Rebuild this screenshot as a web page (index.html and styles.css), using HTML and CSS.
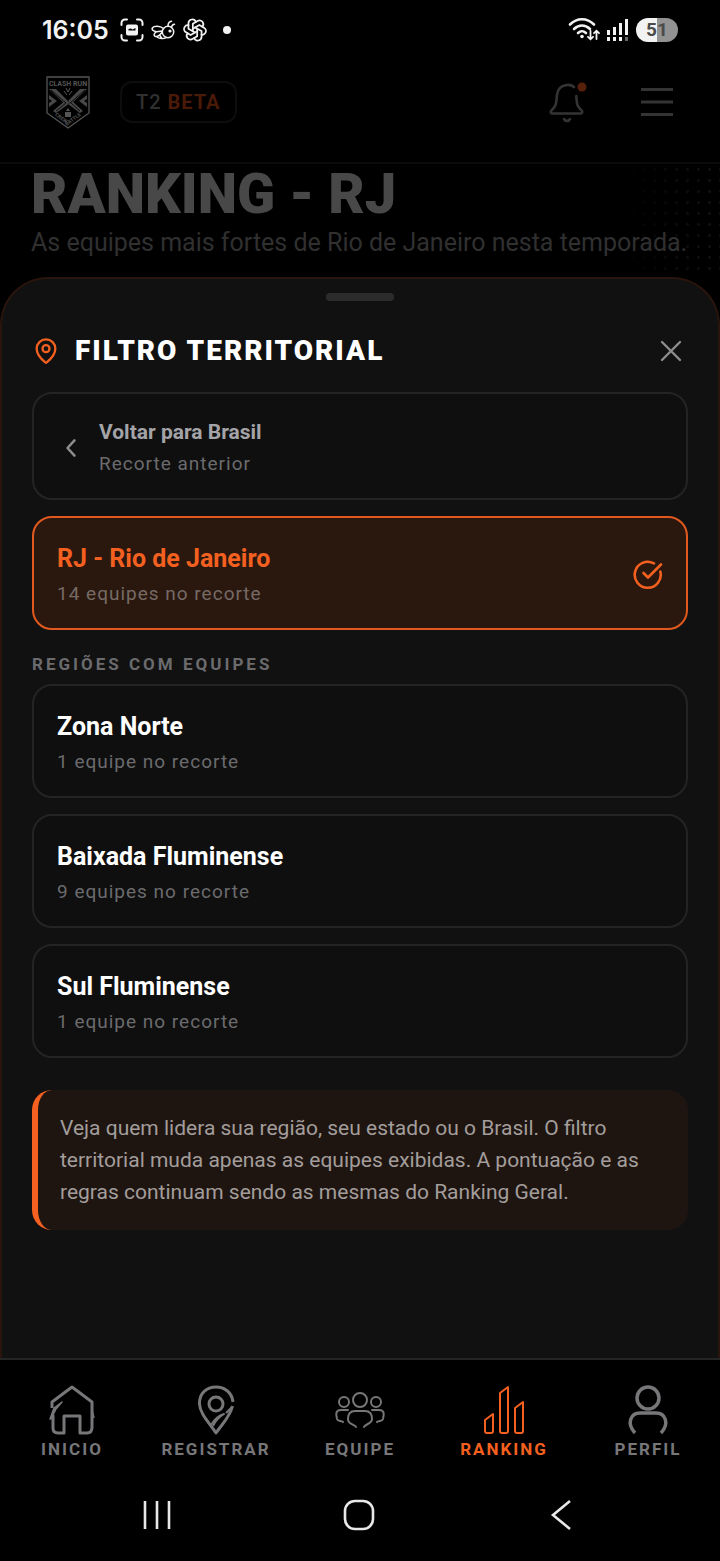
FILE: index.html
```html
<!DOCTYPE html>
<html lang="pt-BR">
<head>
  <meta charset="UTF-8">
  <meta name="viewport" content="width=device-width, initial-scale=1.0">
  <title>Clash Run - Ranking</title>
  <link rel="stylesheet" href="styles.css">
</head>
<body>
  <div class="status-bar">
    <span class="clock">16:05</span>
    <svg class="status-icon" width="24" height="24" viewBox="0 0 24 24" fill="none" stroke="#f2f2f2" stroke-width="2" stroke-linecap="round">
      <path d="M1.500 7V5a3.500 3.500 0 0 1 3.500-3.500h2M17 1.500h2A3.500 3.500 0 0 1 22.500 5v2M22.500 17v2a3.500 3.500 0 0 1-3.500 3.500h-2M7 22.500H5A3.500 3.500 0 0 1 1.500 19v-2"/>
      <rect x="6" y="6.500" width="12" height="11" rx="2" fill="#f2f2f2" stroke="none"/>
      <path d="M8.500 12.500V11l2.500-.5 1.500 1 3-1.500v2.500z" fill="#000" stroke="none"/>
    </svg>
    <svg class="status-icon" width="25" height="22" viewBox="0 0 25 22" fill="none" stroke="#f2f2f2" stroke-width="1.500" stroke-linecap="round" stroke-linejoin="round">
      <circle cx="17" cy="13" r="5.700"/>
      <path d="M12.500 9.500C9 6.500 3 6.500 1.300 9c-1 2.500 3 4 6 3.600l4-.6M5 13c-2 1.500-2.500 3.500-1 4.200 2.500.8 5-1.200 7-4M6 18c2.500 2 7 2 9 .6M9 16.500l1.500 2.500M17 7c0-3 1-4.500 3.500-4.800M20.500 8.500c.3-2 1-3 3-3.200"/>
      <circle cx="19" cy="12" r="1.600" fill="#f2f2f2" stroke="none"/>
    </svg>
    <svg class="status-icon" width="24" height="24" viewBox="1 1 22 22" fill="none" stroke="#f2f2f2" stroke-width="1.600" stroke-linecap="round" stroke-linejoin="round">
      <path d="M11.217 19.384a3.501 3.501 0 0 0 6.783-1.217V13l-6-3.350"/>
      <path d="M5.214 15.014a3.501 3.501 0 0 0 4.446 5.266L14 17.746V10.800"/>
      <path d="M6 7.630c-1.391-.236-2.787.395-3.534 1.689a3.474 3.474 0 0 0 1.271 4.745L8 16.578l6-3.348"/>
      <path d="M12.783 4.616A3.501 3.501 0 0 0 6 5.833V10.900l6 3.450"/>
      <path d="M18.786 8.986A3.501 3.501 0 0 0 14.340 3.720L10 6.254V13.200"/>
      <path d="M18 16.302c1.391.236 2.787-.395 3.534-1.689a3.474 3.474 0 0 0-1.271-4.745l-4.308-2.514L10 10.774"/>
    </svg>
    <span class="more-dot"></span>
    <svg class="signal" width="32" height="26" viewBox="0 0 32 26" fill="none" stroke="#f2f2f2" stroke-width="2.600" stroke-linecap="round">
      <path d="M2 7.500C9 .500 19 .500 26 7.500M6 12c5-4.500 11-4.500 16 0M10 16c3-2.600 5-2.600 8 0"/>
      <circle cx="14" cy="19.500" r="1.800" fill="#f2f2f2" stroke="none"/>
      <path d="M22.500 14v8M20 19.800l2.500 2.500 2.500-2.500M28.500 22v-8M26 16.200l2.500-2.500 2.500 2.500" stroke-width="1.800"/>
    </svg>
    <svg width="21" height="24" viewBox="0 0 21 24" fill="#f2f2f2">
      <rect x="0" y="12" width="3" height="5"/><rect x="6" y="9" width="3" height="8"/><rect x="12" y="5" width="3" height="12"/><rect x="18" y="1" width="3" height="16"/>
      <rect x="0" y="19" width="3" height="4"/><rect x="6" y="19" width="3" height="4"/><rect x="12" y="19" width="3" height="4"/><rect x="18" y="19" width="3" height="4" fill="#666"/>
    </svg>
    <span class="battery">51</span>
  </div>

  <header class="header">
    <a href="#" class="logo" aria-label="Clash Run">
      <svg width="44" height="53" viewBox="0 0 44 53" fill="none" stroke="#555">
        <path d="M1 1h42v36L22 52 1 37z" stroke-width="1.300"/>
        <text x="22" y="10" class="logo-name" text-anchor="middle">CLASH RUN</text>
        <path d="M3 13h7l12 12-3 3zM41 13h-7L22 25l3 3z" fill="#484848" stroke="none"/>
        <path d="M7 35l13-11 4 3-14 10zM37 35L26 25l-4 3 12 9z" fill="#484848" stroke="none"/>
        <path d="M3 19l8 6-8 6v-4l3-2-3-2zM41 19l-8 6 8 6v-4l-3-2 3-2z" fill="#484848" stroke="none"/>
        <path d="M5 14l15 13M39 14L24 27M10 35l10-8M34 35l-9-8" stroke="#0a0a0a" stroke-width="1"/>
        <path d="M20 12l2 4 2-4M18 15l3 4M26 15l-3 4" stroke-width="1"/>
        <path d="M19 36h6v5h-6zM20 35l2-3 2 3" fill="#555" stroke="none"/>
        <path id="logo-curve" d="M4 36L22 49 40 36" stroke="none"/>
        <text class="logo-sub" text-anchor="middle"><textPath href="#logo-curve" startOffset="50%">CREW BATTLE</textPath></text>
      </svg>
    </a>
    <span class="season">T2 <b>BETA</b></span>
    <button class="icon-btn bell" type="button" aria-label="Notificações">
      <svg width="38" height="42" viewBox="0 0 38 42" fill="none" stroke="#343434" stroke-width="2.600" stroke-linecap="round" stroke-linejoin="round">
        <path d="M25 6C22 3 14 3 10.500 7.500c-4 5-2 11.500-4 16.500-1 2.500-3 4-4.500 6-.7 1.500 0 2.500 1.500 2.500h28c1.500 0 2-1 1.500-2.500-1.500-2-3.500-3.500-4.500-6-1-3-1-6-1.200-9"/>
        <path d="M15 38c1 2.500 5 2.500 6 0"/>
        <circle cx="33" cy="6" r="4.500" fill="#57200a" stroke="none"/>
      </svg>
    </button>
    <button class="icon-btn" type="button" aria-label="Menu">
      <svg width="32" height="30" viewBox="0 0 32 30" stroke="#343434" stroke-width="3">
        <path d="M0 2.500h32M0 15h32M0 27.500h32"/>
      </svg>
    </button>
  </header>

  <section class="hero">
    <h1>RANKING - RJ</h1>
    <p>As equipes mais fortes de Rio de Janeiro nesta temporada.</p>
  </section>

  <main class="sheet">
    <div class="handle"></div>
    <div class="sheet-head">
      <svg width="28" height="28" viewBox="0 0 24 24" fill="none" stroke="#f4601f" stroke-width="2" stroke-linejoin="round">
        <path d="M20 10c0 5-5.500 10.200-7.400 11.800a1 1 0 0 1-1.200 0C9.500 20.200 4 15 4 10a8 8 0 0 1 16 0z"/>
        <circle cx="12" cy="10" r="3"/>
      </svg>
      <h2>FILTRO TERRITORIAL</h2>
      <button class="icon-btn" type="button" aria-label="Fechar">
        <svg width="22" height="22" viewBox="0 0 22 22" stroke="#8d8d90" stroke-width="2.400" stroke-linecap="round"><path d="M2 2l18 18M20 2L2 20"/></svg>
      </button>
    </div>

    <div class="options">
      <button class="option back" type="button">
        <svg width="28" height="28" viewBox="0 0 24 24" fill="none" stroke="#8d8d90" stroke-width="2.200" stroke-linecap="round" stroke-linejoin="round"><path d="M15 18.500l-6-6.500 6-6.500"/></svg>
        <span class="option-text">
          <strong>Voltar para Brasil</strong>
          <small>Recorte anterior</small>
        </span>
      </button>
      <button class="option active" type="button">
        <span class="option-text">
          <strong>RJ - Rio de Janeiro</strong>
          <small>14 equipes no recorte</small>
        </span>
        <svg width="30" height="30" viewBox="0 0 30 30" fill="none" stroke="#f4601f" stroke-width="2.600" stroke-linecap="round" stroke-linejoin="round">
          <path d="M27.300 11.500A13 13 0 1 1 21 3.400"/><path d="M10.500 13l4.500 4.500L28 4.500"/>
        </svg>
      </button>
    </div>

    <h3>REGIÕES COM EQUIPES</h3>
    <div class="options">
      <button class="option" type="button">
        <span class="option-text">
          <strong>Zona Norte</strong>
          <small>1 equipe no recorte</small>
        </span>
      </button>
      <button class="option" type="button">
        <span class="option-text">
          <strong>Baixada Fluminense</strong>
          <small>9 equipes no recorte</small>
        </span>
      </button>
      <button class="option" type="button">
        <span class="option-text">
          <strong>Sul Fluminense</strong>
          <small>1 equipe no recorte</small>
        </span>
      </button>
    </div>

    <p class="note">Veja quem lidera sua região, seu estado ou o Brasil. O filtro territorial muda apenas as equipes exibidas. A pontuação e as regras continuam sendo as mesmas do Ranking Geral.</p>
  </main>

  <nav class="tabs">
    <a href="#">
      <svg width="52" height="52" viewBox="0 0 52 52" fill="none" stroke="#77777a" stroke-width="3" stroke-linejoin="round">
        <path d="M6 24V18L26 3l20 15v25q0 6-5 6h-7V32H18v17h-6q-5 0-5-5V31"/>
        <path d="M4 35l4-11 8-6-6 7-5 10zM46 26l2 8" stroke-width="1.500" fill="#77777a"/>
      </svg>
      <span>INICIO</span>
    </a>
    <a href="#">
      <svg width="52" height="52" viewBox="0 0 52 52" fill="none" stroke="#77777a" stroke-width="3" stroke-linejoin="round">
        <path d="M43 18C42 8 34 3 26 3 17 3 9 9 9.500 20c.5 10 10 19 16.500 29 6-9 14-16 16.500-27"/>
        <circle cx="26" cy="20" r="7"/>
        <path d="M21 41c3-5 6-9 13-11-5 3-8 6-11 12M36 29l6-6" stroke-width="2"/>
      </svg>
      <span>REGISTRAR</span>
    </a>
    <a href="#">
      <svg width="52" height="52" viewBox="0 0 52 52" fill="none" stroke="#77777a" stroke-width="2" stroke-linecap="round" stroke-linejoin="round">
        <circle cx="26" cy="16" r="7"/>
        <circle cx="10" cy="18" r="5"/><circle cx="42" cy="18" r="5"/>
        <path d="M22 43c-1-3-8-2-8-8 0-5 2-8 7-8h10c5 0 7 3 7 8s-7 5-8 8M14 26H7c-6 0-5 5-4 9 1 3 4 1 6 3M38 26h7c6 0 5 5 4 9-1 3-4 1-6 3"/>
      </svg>
      <span>EQUIPE</span>
    </a>
    <a href="#" class="current" aria-current="page">
      <svg width="52" height="52" viewBox="0 0 52 52" fill="none" stroke="#f4601f" stroke-width="2" stroke-linejoin="round">
        <path d="M7 36l8-6v17q0 2-2 2H9q-2 0-2-2zM22 9l8-6v44q0 2-2 2h-4q-2 0-2-2zM37 24l8-6v29q0 2-2 2h-4q-2 0-2-2z"/>
      </svg>
      <span>RANKING</span>
    </a>
    <a href="#">
      <svg width="52" height="52" viewBox="0 0 52 52" fill="none" stroke="#77777a" stroke-width="3.500">
        <circle cx="26" cy="14" r="11"/>
        <path d="M13 49c-9-10-4-20 5-20h16c9 0 14 10 5 20"/>
      </svg>
      <span>PERFIL</span>
    </a>
  </nav>

  <div class="system-nav">
    <button class="icon-btn" type="button" aria-label="Recentes">
      <svg width="30" height="32" viewBox="0 0 30 32" stroke="#e8e8e8" stroke-width="2.600"><path d="M3 2v28M15 2v28M27 2v28"/></svg>
    </button>
    <button class="icon-btn" type="button" aria-label="Tela inicial">
      <svg width="32" height="32" viewBox="0 0 32 32" fill="none" stroke="#e8e8e8" stroke-width="2.600"><rect x="2" y="2" width="28" height="28" rx="10"/></svg>
    </button>
    <button class="icon-btn" type="button" aria-label="Voltar">
      <svg width="32" height="32" viewBox="0 0 32 32" fill="none" stroke="#e8e8e8" stroke-width="2.600"><path d="M25 2L8 16l17 14"/></svg>
    </button>
  </div>
</body>
</html>
```
FILE: styles.css
```css
* {
  box-sizing: border-box;
}

body {
  margin: 0;
  min-height: 100vh;
  display: flex;
  flex-direction: column;
  background: #000;
  color: #fff;
  font-family: Roboto, "Liberation Sans", sans-serif;
}

h1, h2, h3, p {
  margin: 0;
}

svg {
  display: block;
  flex-shrink: 0;
}

a {
  color: inherit;
  text-decoration: none;
}

button {
  font-family: inherit;
  color: inherit;
  cursor: pointer;
}

.icon-btn {
  padding: 0;
  border: none;
  background: none;
}

/* status bar */
.status-bar {
  display: flex;
  align-items: center;
  height: 60px;
  padding: 0 42px;
  color: #f2f2f2;
}

.clock {
  margin-right: 11px;
  font-family: Inter, Roboto, sans-serif;
  font-size: 25px;
  font-weight: 600;
}

.status-icon {
  margin-right: 7px;
}

.more-dot {
  width: 8px;
  height: 8px;
  margin-left: 9px;
  border-radius: 50%;
  background: #f2f2f2;
}

.signal {
  margin-left: auto;
  margin-right: 7px;
}

.battery {
  width: 42px;
  margin-left: 8px;
  border-radius: 12px;
  background: linear-gradient(to right, #f2f2f2 50%, #929292 50%);
  color: #4a4a4a;
  font-size: 19px;
  font-weight: 700;
  line-height: 24px;
  text-align: center;
}

/* header */
.header {
  display: flex;
  align-items: center;
  height: 104px;
  padding: 0 47px 18px 46px;
  border-bottom: 2px solid #0b0b0b;
}

.logo-name {
  fill: #555;
  stroke: none;
  font-size: 7px;
  font-weight: 700;
}

.logo-sub {
  fill: #555;
  stroke: none;
  font-size: 5px;
  font-weight: 700;
}

.season {
  margin-left: 30px;
  padding: 0 14px;
  border: 2px solid #0d0d0d;
  border-radius: 12px;
  color: #303030;
  font-size: 20px;
  font-weight: 500;
  letter-spacing: 1px;
  line-height: 38px;
}

.season b {
  color: #4a1a08;
}

.bell {
  margin-left: auto;
  margin-right: 54px;
}

/* page title behind the sheet */
.hero {
  padding: 0 31px 16px;
  background-image:
    linear-gradient(to right, #000 86%, transparent),
    radial-gradient(circle, #121212 1px, transparent 2px);
  background-size: auto, 11px 11px;
}

.hero h1 {
  color: #484848;
  font-size: 56px;
  font-weight: 900;
  line-height: 60px;
}

.hero p {
  color: #303030;
  font-size: 25px;
  line-height: 37px;
}

/* filter sheet */
.sheet {
  flex: 1;
  padding: 14px 30px 32px;
  border: 2px solid #2a150c;
  border-bottom: none;
  border-radius: 48px 48px 0 0;
  background: #111;
}

.handle {
  width: 68px;
  height: 8px;
  margin: 0 auto;
  border-radius: 4px;
  background: #2c2c2d;
}

.sheet-head {
  display: flex;
  align-items: center;
  gap: 15px;
  padding: 32px 6px 23px 0;
}

.sheet-head h2 {
  flex: 1;
  font-size: 28px;
  font-weight: 900;
  letter-spacing: 2px;
  line-height: 36px;
}

.options {
  display: flex;
  flex-direction: column;
  gap: 16px;
}

.option {
  display: flex;
  align-items: center;
  width: 100%;
  padding: 25px 23px 21px;
  border: 2px solid #242425;
  border-radius: 20px;
  background: #0f0f0f;
  text-align: left;
}

.option-text {
  flex: 1;
}

.option strong {
  display: block;
  font-size: 25px;
  font-weight: 700;
  line-height: 32px;
}

.option small {
  display: block;
  margin-top: 6px;
  color: #6b6b6e;
  font-size: 19px;
  letter-spacing: 1px;
  line-height: 26px;
}

.back {
  gap: 14px;
}

.back strong {
  color: #a4a4a8;
  font-size: 21px;
  line-height: 26px;
}

.active {
  border-color: #e2591f;
  background: #2a180f;
}

.active strong {
  color: #f4601f;
}

.active small {
  color: #766a65;
}

.sheet h3 {
  padding: 24px 0 10px;
  color: #6b6b6e;
  font-size: 17px;
  font-weight: 700;
  letter-spacing: 3px;
  line-height: 20px;
}

.note {
  margin-top: 32px;
  padding: 22px 24px 22px 22px;
  border-left: 6px solid #f4601f;
  border-radius: 20px;
  background: #1e1511;
  color: #a39d9b;
  font-size: 21px;
  line-height: 32px;
}

/* bottom tabs */
.tabs {
  display: grid;
  grid-template-columns: repeat(5, 1fr);
  padding: 24px 0 10px;
  border-top: 2px solid #242425;
  color: #77777a;
}

.tabs a {
  display: flex;
  flex-direction: column;
  align-items: center;
  gap: 3px;
  font-size: 17px;
  font-weight: 700;
  letter-spacing: 2px;
  line-height: 20px;
}

.tabs .current {
  color: #f4601f;
}

/* android buttons */
.system-nav {
  display: grid;
  grid-template-columns: repeat(3, 1fr);
  justify-items: center;
  align-items: center;
  height: 92px;
  padding: 0 58px 0 56px;
}
```
